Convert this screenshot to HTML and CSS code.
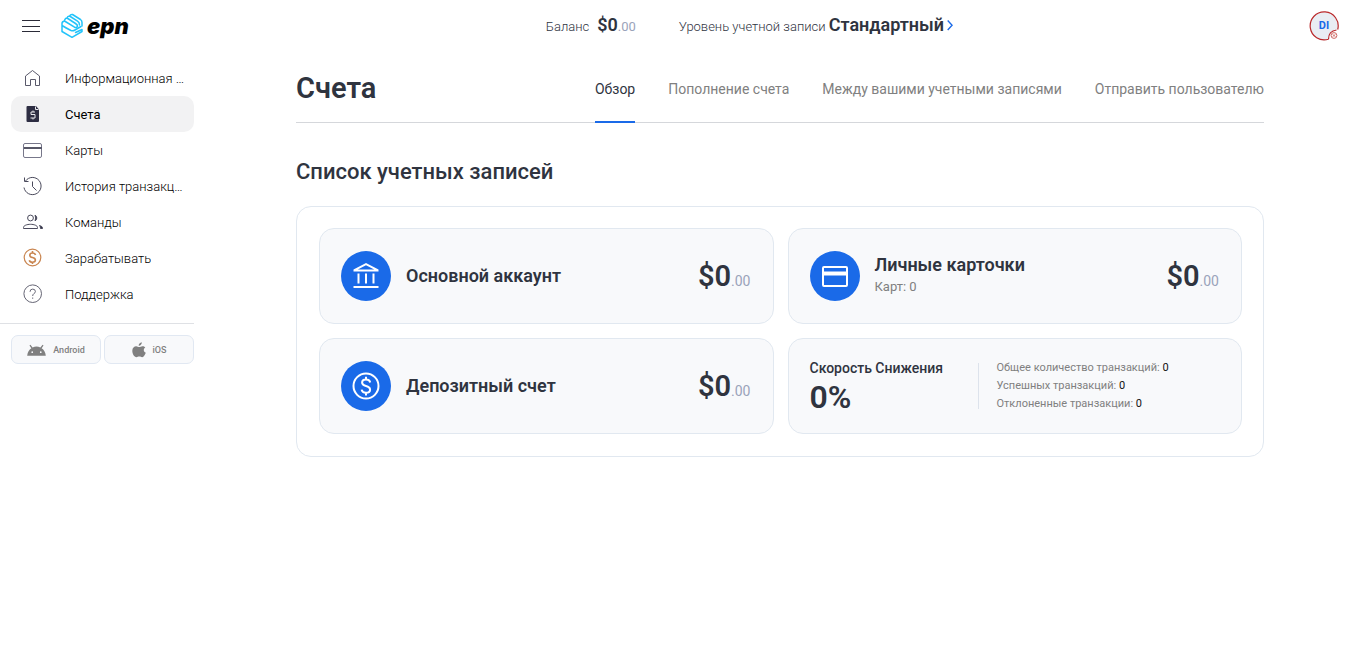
FILE: index.html
```html
<!DOCTYPE html>
<html lang="ru">
<head>
<meta charset="utf-8">
<meta name="viewport" content="width=device-width, initial-scale=1">
<title>Счета</title>
<link rel="stylesheet" href="styles.css">
</head>
<body>
<header class="topbar">
  <div class="brand">
    <button class="menu-button" type="button" aria-label="Меню">
      <svg width="18" height="14" viewBox="0 0 18 14" stroke="#2b2b38" stroke-width="1"><path d="M0 1.500h18M0 7.500h18M0 12.500h18"/></svg>
    </button>
    <a class="logo" href="#">
      <svg width="24" height="26" viewBox="0 0 24 26" fill="none" stroke="#22c3fa" stroke-width="1.500" stroke-linejoin="round" stroke-linecap="round"><path d="M4.500 8Q2 8.500 2 10.500V18.500L12 24.300 22 18.500V16.500L15.500 19.500M2 12.500Q6 15 11 17.500Q13 18.200 15 17L21 13.500"/><path d="M4.500 8 14.500 14.200Q16.500 15 17.500 13.500M7 5 15.500 10.500Q17.800 12 17.500 13.500M9.500 3 17.500 8.200Q19.500 9.500 19.500 12M12.500 1.500 20.500 6.500Q22 7.500 22 9.500V13M4.500 8Q5 5 7 5 7.500 3 9.500 3 10.500 1.200 12.500 1.500"/></svg>
      <span class="logo-text">epn</span>
    </a>
  </div>
  <div class="summary">
    <div class="balance"><span>Баланс</span><span class="amount amount-small">$0<small>.00</small></span></div>
    <a class="level" href="#"><span>Уровень учетной записи</span> <strong>Стандартный</strong>
      <svg width="6" height="11" viewBox="0 0 6 11" fill="none" stroke="#1a6ae8" stroke-width="1.400"><path d="M.7.600 5.100 5.300.7 10"/></svg></a>
  </div>
  <button class="avatar" type="button" aria-label="Профиль">
    <svg class="avatar-ring" width="30" height="30" viewBox="0 0 30 30" fill="none"><path d="M20.500 28.200A14 14 0 1 1 28.800 18.500Q22 18 20.500 23.500Z" fill="#e9edf3"/><path d="M19.500 28.200A14 14 0 1 1 28.700 18.500M19.500 28.200Q19.500 20 27.500 19" stroke="#b9292b" stroke-width="1.200"/><circle cx="25" cy="24.500" r="2.900" stroke="#cf6a66"/><path d="m23.800 23.300 2.400 2.400m0-2.400-2.400 2.400" stroke="#cf6a66"/></svg>
    <span class="avatar-text">DI</span>
  </button>
</header>
<div class="layout">
  <aside class="sidebar">
    <nav class="nav">
      <a class="nav-item" href="#"><svg width="20" height="20" viewBox="0 0 20 20" fill="none" stroke="#5a5a6b"><path d="M2.500 8 9.500 2.500 16.500 8v9.500h-4v-6h-5v6h-5Z"/></svg><span>Информационная панель</span></a>
      <a class="nav-item active" href="#"><svg width="20" height="20" viewBox="0 0 20 20"><path d="M4.500 2H13l3 3.500V17a1 1 0 0 1-1 1H4.500a1 1 0 0 1-1-1V3a1 1 0 0 1 1-1Z" fill="#2d2d42"/><path d="M12 8H8v2.500h4V14H7.500M10 6.500V8m0 6v1.500M12.500 2.500V5.500H15.500" fill="none" stroke="#e8e8ec"/></svg><span>Счета</span></a>
      <a class="nav-item" href="#"><svg width="20" height="20" viewBox="0 0 20 20" fill="none" stroke="#77778a"><rect x=".500" y="3.500" width="18" height="14" rx="1.500"/><path d="M1 8h17.500" stroke="#2d2d42" stroke-width="1.600"/></svg><span>Карты</span></a>
      <a class="nav-item" href="#"><svg width="20" height="20" viewBox="0 0 20 20" fill="none" stroke="#4a4a5c"><path d="M2.500 5A8.600 8.600 0 1 1 1 11.500M1.500 1.500v4h4M9.500 5.500v5l4 4"/></svg><span>История транзакций</span></a>
      <a class="nav-item" href="#"><svg width="20" height="20" viewBox="0 0 20 20" fill="none" stroke="#4a4a5c"><circle cx="7.500" cy="6" r="2.900"/><path d="M.5 16.500v-1c0-2 3.500-3.200 7-3.200s7 1.200 7 3.200v1Z"/><path d="M12 3.200c2.300.8 2.300 4.800 0 5.600Q13.500 6 12 3.200Z" fill="#2d2d42"/><path d="M16.500 13.500q3 .8 3 2.500v.5h-2q0-2-1-3Z" fill="#2d2d42"/></svg><span>Команды</span></a>
      <a class="nav-item" href="#"><svg width="20" height="20" viewBox="0 0 20 20" fill="none" stroke="#c98550"><circle cx="9.500" cy="9.500" r="8.300" stroke-width="1.200"/><path d="M12.500 7q-.5-2-3-2-2.700 0-2.700 2.200Q6.800 9 9.500 9.500t2.900 2.500Q12.400 14.200 9.500 14.200q-2.700 0-3.200-2M9.500 3v2M9.500 14v2" stroke-width="1.600"/></svg><span>Зарабатывать</span></a>
      <a class="nav-item" href="#"><svg width="20" height="20" viewBox="0 0 20 20" fill="none" stroke="#666675"><circle cx="9.700" cy="9.700" r="8.800"/><path d="M7 7.800q0-2.700 2.700-2.700T12.400 7.600Q12.400 8.800 10.700 9.800q-1 .7-1 2.200M9.700 13.500v1.300"/></svg><span>Поддержка</span></a>
    </nav>
    <div class="apps">
      <a class="app" href="#"><svg width="19" height="12" viewBox="0 0 20 12"><path fill="#808080" fill-rule="evenodd" d="M.2 12C.5 8.500 2.200 5.700 4.600 4.200L2.600 1.300l1-.8L5.900 3.300a10.500 10.500 0 0 1 8.200 0L16.400.5l1 .8L15.400 4.200c2.400 1.500 4.100 4.300 4.400 7.800ZM5.500 9.200a.9.900 0 1 0 0-1.800.9.900 0 0 0 0 1.800Zm9 0a.9.900 0 1 0 0-1.800.9.900 0 0 0 0 1.800Z"/></svg><span>Android</span></a>
      <a class="app" href="#"><svg width="14" height="16" viewBox="0 0 14 16" fill="#808080"><path d="M9.800.2c.2 1.700-1.200 3.600-3.100 3.500C6.500 2.100 8 .4 9.800.2ZM13.300 5.500c-2.200 1.400-1.900 4.300.5 5.300-.5 1.500-2 4.300-3.600 4.400-1.200 0-1.600-.7-2.900-.7s-1.800.7-2.900.7C2.300 15.200.3 12 .3 8.800c0-3 1.900-4.500 3.900-4.500 1.200 0 2.200.8 3 .8s2-.9 3.300-.9c1 0 2.100.5 2.800 1.300Z"/></svg><span>iOS</span></a>
    </div>
  </aside>
  <main class="content">
    <div class="page-head">
      <h1>Счета</h1>
      <nav class="tabs">
        <a class="tab current" href="#">Обзор</a>
        <a class="tab" href="#">Пополнение счета</a>
        <a class="tab" href="#">Между вашими учетными записями</a>
        <a class="tab" href="#">Отправить пользователю</a>
      </nav>
    </div>
    <h2>Список учетных записей</h2>
    <section class="panel">
      <article class="card">
        <span class="badge"><svg width="28" height="28" viewBox="0 0 28 28" fill="none" stroke="#fff" stroke-width="2"><path d="M14 2.200 2.500 8v.500h23V8ZM1.500 25h25"/><path d="M6.500 11.500v10M14 11.500v10M21.500 11.500v10"/></svg></span>
        <h3>Основной аккаунт</h3>
        <span class="amount">$0<small>.00</small></span>
      </article>
      <article class="card">
        <span class="badge"><svg width="28" height="28" viewBox="0 0 28 28" fill="none" stroke="#fff" stroke-width="2"><rect x="2" y="5" width="24" height="19" rx="1"/><path d="M2 11.500h24" stroke-width="4"/></svg></span>
        <div class="card-text"><h3>Личные карточки</h3><p>Карт: 0</p></div>
        <span class="amount">$0<small>.00</small></span>
      </article>
      <article class="card">
        <span class="badge"><svg width="28" height="28" viewBox="0 0 28 28" fill="none" stroke="#fff" stroke-width="2"><circle cx="14" cy="14" r="12.500"/><path d="M18.200 10.500Q17.800 7.500 14 7.500q-3.900 0-3.900 3.100 0 2.500 3.900 3.400t4.100 3.500q0 3.300-4.100 3.300-3.700 0-4.400-3.200M14 4.800v2.700M14 20.800v2.700"/></svg></span>
        <h3>Депозитный счет</h3>
        <span class="amount">$0<small>.00</small></span>
      </article>
      <article class="card stats">
        <div class="rate"><h4>Скорость Снижения</h4><strong>0%</strong></div>
        <div class="divider"></div>
        <ul class="counts">
          <li>Общее количество транзакций: <b>0</b></li>
          <li>Успешных транзакций: <b>0</b></li>
          <li>Отклоненные транзакции: <b>0</b></li>
        </ul>
      </article>
    </section>
  </main>
</div>
</body>
</html>
```
FILE: styles.css
```css
* { box-sizing: border-box; }
body { margin: 0; background: #fff; color: #2f343f; font-family: Roboto, "Liberation Sans", sans-serif; font-size: 13px; }
a { color: inherit; text-decoration: none; }
button { border: 0; padding: 0; background: none; font: inherit; cursor: pointer; }
h1, h2, h3, h4, p, ul { margin: 0; padding: 0; font-weight: 500; }
svg { display: block; flex: none; }

.topbar { display: flex; align-items: center; height: 52px; padding: 0 16px 0 22px; }
.brand { display: flex; align-items: center; gap: 20px; width: 172px; }
.logo { display: flex; align-items: center; gap: 3px; }
.logo-text { color: #000; font: italic 900 22px/26px Inter, sans-serif; }
.summary { display: flex; flex: 1; justify-content: center; align-items: baseline; gap: 43px; padding: 0 4px 4px 0; font-weight: 300; }
.balance { display: flex; align-items: baseline; gap: 8px; }
.level { white-space: nowrap; }
.level strong { font-size: 18px; font-weight: 600; }
.level svg { display: inline-block; }
.avatar { position: relative; width: 30px; height: 30px; }
.avatar-text { position: absolute; inset: 0; color: #1a6ae8; font-size: 11px; font-weight: 700; line-height: 30px; }

.layout { display: flex; }
.sidebar { flex: none; width: 194px; }
.nav { padding: 8px 0 11px 11px; border-bottom: 1px solid #dfe1e5; }
.nav-item { display: flex; align-items: center; gap: 22px; height: 36px; padding: 0 8px 0 12px; border-radius: 10px; color: #000; font-weight: 300; }
.nav-item.active { background: #f2f2f3; font-weight: 400; }
.nav-item span { overflow: hidden; text-overflow: ellipsis; white-space: nowrap; }
.apps { display: flex; gap: 3px; padding: 11px 0 0 11px; }
.app { display: flex; flex: 1; align-items: center; justify-content: center; gap: 7px; height: 29px; border: 1px solid #e1e8f2; border-radius: 7px; background: #f8f9fb; color: #808080; font-size: 9px; font-weight: 500; }

.content { flex: 1; min-width: 0; padding: 8px 91px 0 102px; }
.page-head { display: flex; justify-content: space-between; height: 63px; border-bottom: 1px solid #d5d7db; }
h1 { font-size: 29px; line-height: 56px; font-weight: 600; }
.tabs { display: flex; gap: 33px; }
.tab { height: 63px; color: #808080; font-size: 14px; line-height: 58px; white-space: nowrap; }
.tab.current { color: #2f343f; border-bottom: 2px solid #1a6ae8; }
h2 { padding: 35px 0 21px; font-size: 22px; line-height: 27px; }
.panel { display: grid; grid-template-columns: 1fr 1fr; gap: 14px; padding: 21px 21px 22px 22px; border: 1px solid #e1e8f0; border-radius: 15px; }
.card { display: flex; align-items: center; gap: 15px; height: 96px; padding: 0 22px 0 21px; border: 1px solid #e1e8f0; border-radius: 15px; background: #f8f9fb; }
.badge { display: flex; flex: none; align-items: center; justify-content: center; width: 50px; height: 50px; border-radius: 50%; background: #1a6ae8; }
h3 { font-size: 18px; line-height: 22px; font-weight: 600; }
.card-text p { color: #808080; font-size: 13px; line-height: 22px; font-weight: 400; }
.amount { margin-left: auto; font-size: 29px; font-weight: 600; white-space: nowrap; }
.amount small { color: #9aa3ba; font-size: 14px; font-weight: 400; }
.amount-small { font-size: 18px; }
.amount-small small { font-size: 13px; }
.stats { gap: 18px; }
.rate { flex: none; width: 150px; }
.divider { width: 1px; height: 46px; background: #dde3ec; }
.rate h4 { font-size: 14px; line-height: 22px; }
.rate strong { display: block; font-size: 32px; line-height: 36px; font-weight: 600; }
.counts { list-style: none; color: #808080; font-size: 11px; line-height: 18px; font-weight: 400; }
.counts b { color: #111; font-weight: 400; }
```
